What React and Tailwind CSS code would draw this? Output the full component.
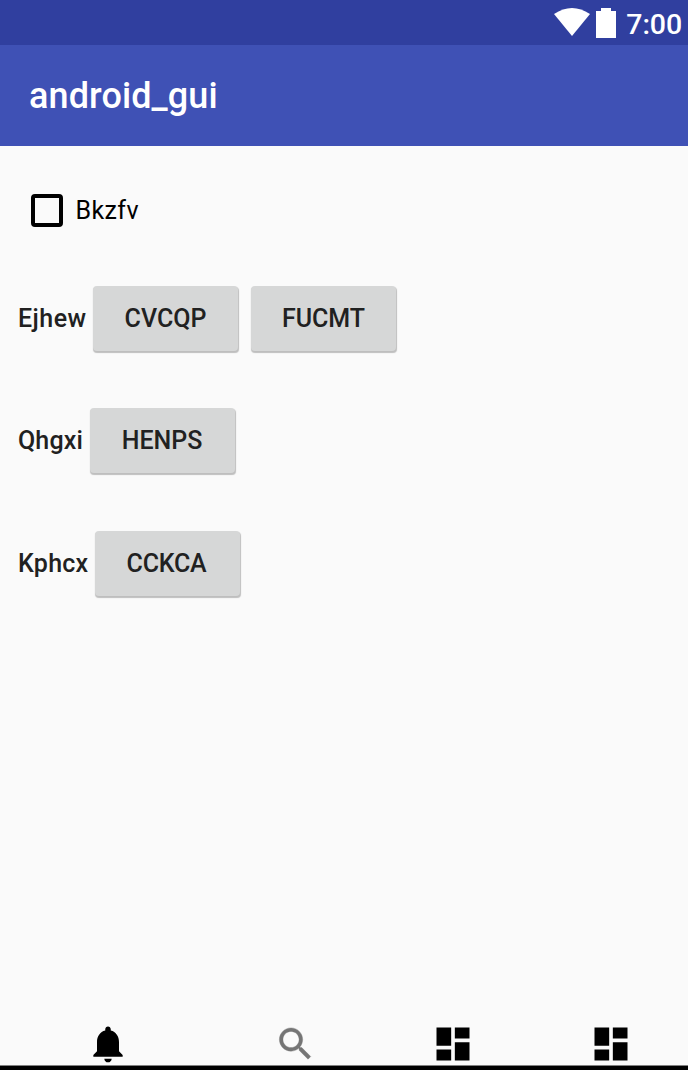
const Btn = ({ children, className = "" }) => (
  <button className={"flex h-[65px] w-[145px] items-center justify-center rounded-[4px] bg-[#d6d7d7] text-[25px] font-medium text-[#212121] shadow-[0.5px_1.5px_1px_rgba(0,0,0,0.24)] " + className}>{children}</button>
);
const Dash = ({ className }) => (
  <svg className={className} viewBox="0 0 24 24" fill="#000"><path d="M3 13h8V3H3v10zm0 8h8v-6H3v6zm10 0h8V11h-8v10zm0-18v6h8V3h-8z" /></svg>
);
const Row = ({ label, width, children }) => (
  <div className="flex h-[65px] items-center">
    <span className={"shrink-0 text-[25px] font-medium text-[#212121] " + width}>{label}</span>
    <div className="flex gap-[13px]">{children}</div>
  </div>
);
export default function App() {
  return (
    <div className="flex h-[1070px] w-[688px] flex-col overflow-hidden bg-[#fafafa] font-['Roboto',sans-serif]">
      <div className="flex h-[45px] items-center justify-end bg-[#303f9f] pr-[6px] text-white">
        <svg className="mr-[6px] h-[29px] w-[36px]" viewBox="0 0 36 29" fill="#fff"><path d="M0 6Q18-6 36 6L18 28Z" /></svg>
        <svg className="mr-[10px] h-[30px] w-[20px]" viewBox="0 0 20 30" fill="#fff"><path d="M5 0h10v3h5v27H0V3h5z" /></svg>
        <span className="pt-[5px] text-[28.5px] leading-none font-medium tracking-[-0.1px]">7:00</span>
      </div>
      <div className="flex h-[101px] items-center bg-[#3f51b5] pl-[29px] text-[36px] font-medium tracking-[0.1px] text-white">android_gui</div>
      <div className="flex flex-1 flex-col pt-[48px]">
        <div className="flex h-[33px] items-center gap-[12.5px] pl-[30.5px]">
          <span className="h-[32.5px] w-[32.5px] rounded-[4px] border-[4px] border-black" />
          <span className="text-[25px] tracking-[0.4px] text-black">Bkzfv</span>
        </div>
        <div className="mt-[59px] flex flex-col gap-[57.4px] pl-[18px]">
          <Row label="Ejhew" width="w-[75px] tracking-[0.45px]"><Btn>CVCQP</Btn><Btn>FUCMT</Btn></Row>
          <Row label="Qhgxi" width="w-[71.5px] tracking-[0.15px]"><Btn>HENPS</Btn></Row>
          <Row label="Kphcx" width="w-[77px] tracking-[0.25px]"><Btn className="pr-[2px] tracking-[-0.2px]">CCKCA</Btn></Row>
        </div>
      </div>
      <div className="flex h-[48px] items-start border-b-[4px] border-black bg-[linear-gradient(#808080,#808080)] bg-[length:100%_1px] bg-bottom bg-no-repeat pl-[86px]">
        <svg className="h-[44px] w-[44px] shrink-0" viewBox="0 0 24 24" fill="#000"><path d="M12 22c1.1 0 2-.9 2-2h-4c0 1.1.89 2 2 2zm6-6v-5c0-3.07-1.64-5.64-4.5-6.32V4c0-.83-.67-1.5-1.5-1.5s-1.5.67-1.5 1.5v.68C7.63 5.36 6 7.92 6 11v5l-2 2v1h16v-1l-2-2z" /></svg>
        <svg className="ml-[144px] h-[44px] w-[43px] shrink-0" viewBox="0 0 24 24" fill="#757575" stroke="#757575" strokeWidth="0.2"><path d="M15.5 14h-.79l-.28-.27C15.41 12.59 16 11.11 16 9.5 16 5.91 13.09 3 9.5 3S3 5.91 3 9.5 5.91 16 9.5 16c1.61 0 3.09-.59 4.23-1.57l.27.28v.79l5 4.99L20.49 19l-4.99-5zm-6 0C7.01 14 5 11.99 5 9.5S7.01 5 9.5 5 14 7.01 14 9.5 11.99 14 9.5 14z" /></svg>
        <Dash className="ml-[114px] h-[44px] w-[44px] shrink-0" />
        <Dash className="ml-[114.3px] h-[44px] w-[44px] shrink-0" />
      </div>
    </div>
  );
}
